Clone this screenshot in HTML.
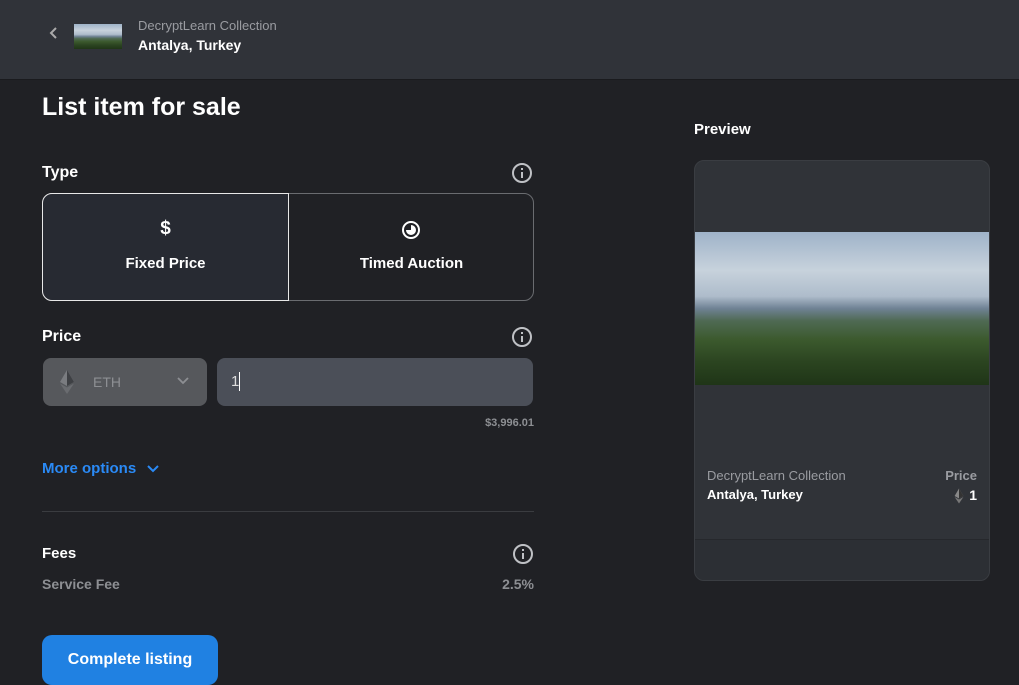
<!DOCTYPE html>
<html><head><style>
*{margin:0;padding:0;box-sizing:border-box}
body{width:1019px;height:677px;overflow:hidden;background:#202125;font-family:"Liberation Sans",sans-serif;color:#fff;position:relative}
.hdr{position:absolute;left:0;top:0;width:1019px;height:80px;background:#303339;border-bottom:1px solid #1a1b1e}
.abs{position:absolute}
.b{font-weight:bold}
.info{position:absolute;width:20px;height:20px;border:2px solid #bfc1c5;border-radius:50%;}
.info:before{content:"";position:absolute;left:7px;top:3px;width:2px;height:2px;background:#bfc1c5}
.info:after{content:"";position:absolute;left:7px;top:7px;width:2px;height:6px;background:#bfc1c5}
.img{background:linear-gradient(180deg,#9fb3c9 0%,#c7d2dc 25%,#aebccb 42%,#6f8294 50%,#4f6a54 58%,#3c5a2e 70%,#2b4420 85%,#1f3517 100%)}
</style></head><body>
<div class="hdr">
 <svg class="abs" style="left:49px;top:26px" width="10" height="14" viewBox="0 0 10 14"><path d="M7 2L2 7l5 5" stroke="#aaa" stroke-width="2" fill="none"/></svg>
 <div class="abs img" style="left:74px;top:24px;width:48px;height:25px"></div>
 <div class="abs" style="left:138px;top:18px;font-size:13px;color:#9a9ca1">DecryptLearn Collection</div>
 <div class="abs b" style="left:138px;top:37px;font-size:14px">Antalya, Turkey</div>
</div>
<div class="abs b" style="left:42px;top:93px;font-size:25px">List item for sale</div>
<div class="abs b" style="left:42px;top:164px;font-size:16px">Type</div>
<div class="info" style="left:512px;top:163px"></div>
<div class="abs" style="left:42px;top:193px;width:492px;height:108px;border:1px solid #6a6c70;border-radius:10px"></div>
<div class="abs" style="left:42px;top:193px;width:247px;height:108px;border:1px solid #e8e8e8;border-radius:10px 0 0 10px;background:#272a32"></div>
<div class="abs b" style="left:42px;top:218px;width:247px;text-align:center;font-size:19px">$</div>
<div class="abs b" style="left:42px;top:255px;width:247px;text-align:center;font-size:15px">Fixed Price</div>
<svg class="abs" style="left:401px;top:220px" width="20" height="20" viewBox="0 0 20 20"><circle cx="10" cy="10" r="8" stroke="#fff" stroke-width="2" fill="none"/><path d="M10 5a5 5 0 1 1-5 5h5z" fill="#fff"/></svg>
<div class="abs b" style="left:289px;top:255px;width:245px;text-align:center;font-size:15px">Timed Auction</div>
<div class="abs b" style="left:42px;top:328px;font-size:16px">Price</div>
<div class="info" style="left:512px;top:327px"></div>
<div class="abs" style="left:43px;top:358px;width:164px;height:48px;background:#56585c;border-radius:8px"></div>
<svg class="abs" style="left:59px;top:370px" width="16" height="24" viewBox="0 0 16 24"><path d="M8 0L1 12l7 4 7-4z" fill="#7a7c80"/><path d="M8 0v16l7-4z" fill="#3e4044"/><path d="M1 13.5L8 24l7-10.5-7 4z" fill="#6a6c70"/></svg>
<div class="abs" style="left:93px;top:374px;font-size:14px;color:#8d8f93">ETH</div>
<svg class="abs" style="left:177px;top:377px" width="12" height="8" viewBox="0 0 12 8"><path d="M1 1l5 5 5-5" stroke="#8d8f93" stroke-width="1.8" fill="none"/></svg>
<div class="abs" style="left:217px;top:358px;width:316px;height:48px;background:#4b4f58;border-radius:8px"></div>
<div class="abs" style="left:231px;top:373px;font-size:15px;color:#ddd">1</div>
<div class="abs" style="left:239px;top:372px;width:1px;height:19px;background:#fff"></div>
<div class="abs b" style="left:434px;top:417px;width:100px;text-align:right;font-size:11px;color:#8d8f93">$3,996.01</div>
<div class="abs b" style="left:42px;top:460px;font-size:15px;color:#2a8af6">More options</div>
<svg class="abs" style="left:147px;top:465px" width="12" height="8" viewBox="0 0 12 8"><path d="M1 1l5 5 5-5" stroke="#2a8af6" stroke-width="2" fill="none"/></svg>
<div class="abs" style="left:42px;top:511px;width:492px;height:1px;background:#3a3c40"></div>
<div class="abs b" style="left:42px;top:545px;font-size:15px">Fees</div>
<div class="info" style="left:513px;top:544px"></div>
<div class="abs b" style="left:42px;top:576px;font-size:14px;color:#8d8f93">Service Fee</div>
<div class="abs b" style="left:434px;top:576px;width:100px;text-align:right;font-size:14px;color:#8d8f93">2.5%</div>
<div class="abs b" style="left:42px;top:635px;width:176px;height:50px;background:#2081e2;border-radius:10px;text-align:center;line-height:50px;font-size:16px">Complete listing</div>
<div class="abs b" style="left:694px;top:121px;font-size:15px">Preview</div>
<div class="abs" style="left:694px;top:160px;width:296px;height:421px;background:#303338;border:1px solid #3a3d42;border-radius:10px;overflow:hidden">
 <div class="abs img" style="left:0;top:71px;width:296px;height:153px"></div>
 <div class="abs" style="left:0;top:378px;width:296px;height:43px;background:#2c2f34;border-top:1px solid #26282c"></div>
 <div class="abs" style="left:12px;top:307px;font-size:13px;color:#9a9ca1">DecryptLearn Collection</div>
 <div class="abs b" style="left:12px;top:326px;font-size:13px">Antalya, Turkey</div>
 <div class="abs b" style="left:230px;top:307px;width:52px;text-align:right;font-size:13px;color:#9a9ca1">Price</div>
 <div class="abs b" style="left:230px;top:326px;width:52px;text-align:right;font-size:14px">1</div>
 <svg class="abs" style="left:259px;top:327px" width="10" height="16" viewBox="0 0 16 24"><path d="M8 0L1 12l7 4 7-4z" fill="#888"/><path d="M8 0v16l7-4z" fill="#333"/><path d="M1 13.5L8 24l7-10.5-7 4z" fill="#777"/></svg>
</div>
</body></html>
